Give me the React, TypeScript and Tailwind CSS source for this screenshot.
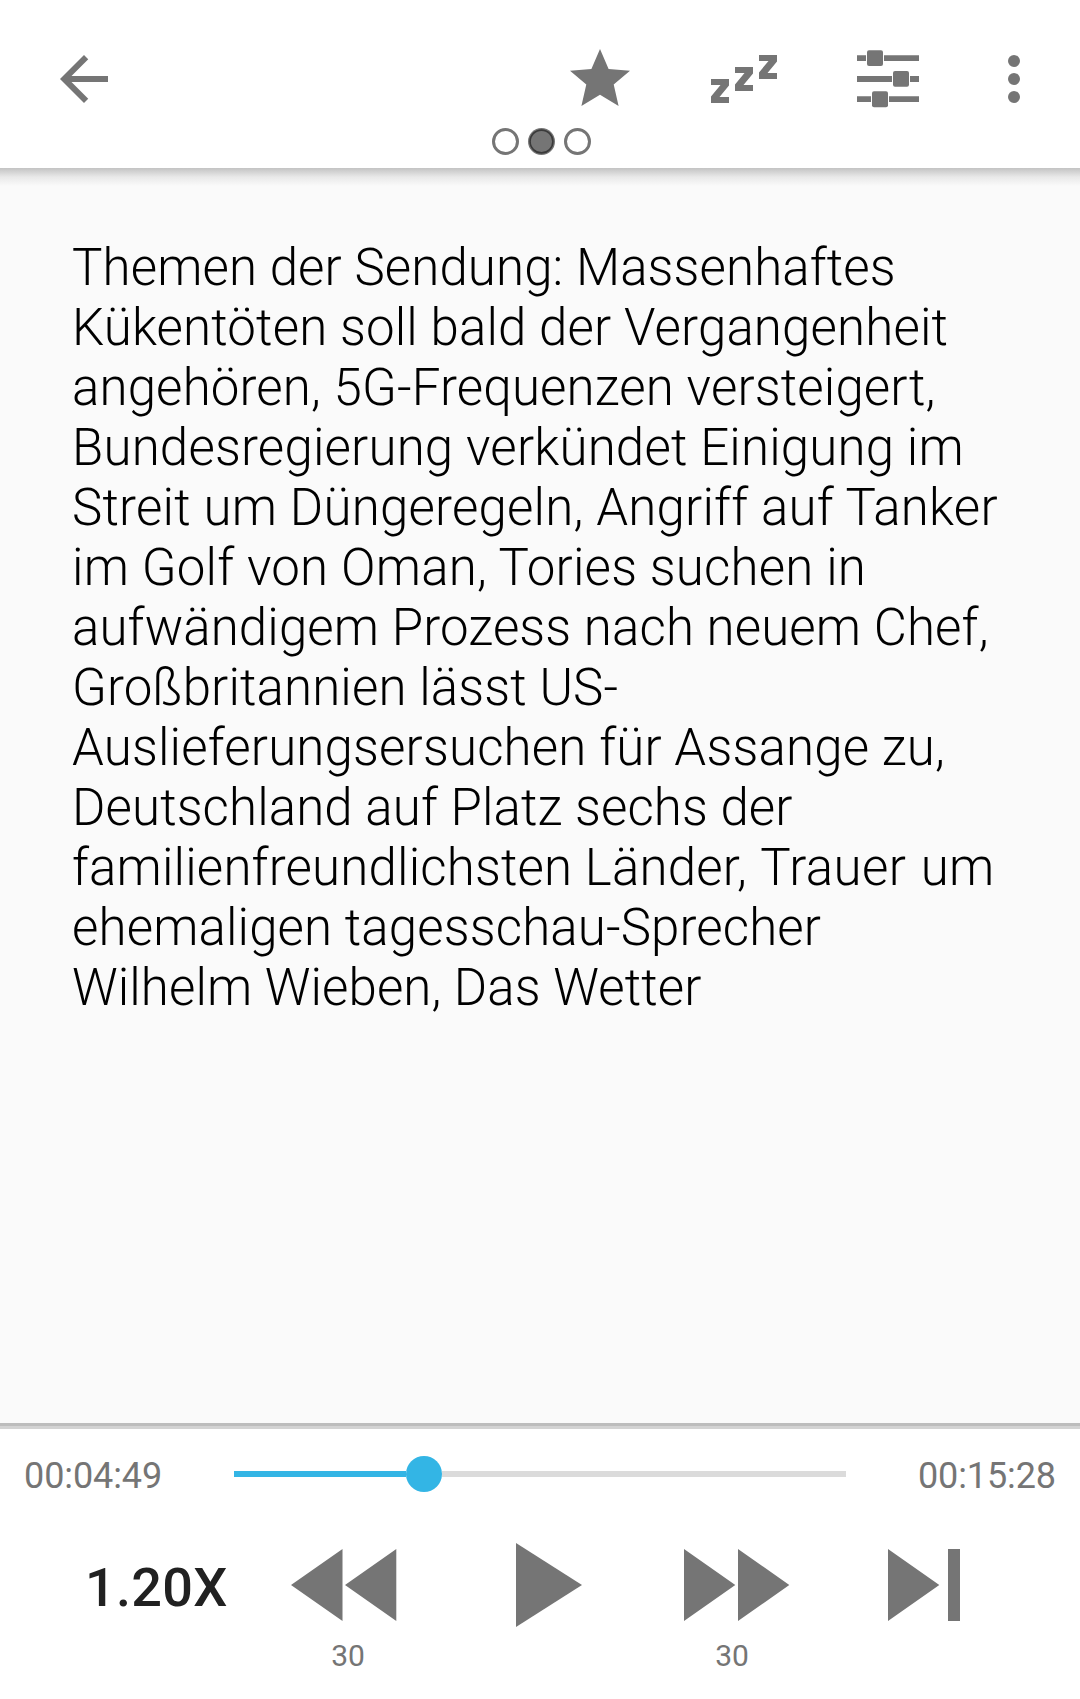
const lines = [
  { text: "Themen der Sendung: Massenhaftes", tracking: "tracking-[0.11px]" },
  { text: "Kükentöten soll bald der Vergangenheit", tracking: "tracking-[0.15px]" },
  { text: "angehören, 5G-Frequenzen versteigert,", tracking: "tracking-[0.14px]" },
  { text: "Bundesregierung verkündet Einigung im", tracking: "tracking-[0.18px]" },
  { text: "Streit um Düngeregeln, Angriff auf Tanker", tracking: "tracking-[0.21px]" },
  { text: "im Golf von Oman, Tories suchen in", tracking: "tracking-[0.2px]" },
  { text: "aufwändigem Prozess nach neuem Chef,", tracking: "tracking-[0.12px]" },
  { text: "Großbritannien lässt US-", tracking: "tracking-[0.14px]" },
  { text: "Auslieferungsersuchen für Assange zu,", tracking: "tracking-[0.17px]" },
  { text: "Deutschland auf Platz sechs der", tracking: "tracking-[0.11px]" },
  { text: "familienfreundlichsten Länder,", tail: " Trauer um", tracking: "tracking-[0.17px]" },
  { text: "ehemaligen tagesschau-Sprecher", tracking: "tracking-[0.13px]" },
  { text: "Wilhelm Wieben, Das Wetter", tracking: "tracking-[0.08px]" },
];

function Header() {
  return (
    <header className="h-[168px] shrink-0 bg-white text-[#757575]">
      <div className="flex h-[122px] items-start pt-[43px]">
        <button className="ml-12 h-18 w-18" aria-label="Zurück">
          <svg viewBox="0 0 24 24" className="size-18 fill-current">
            <path d="M20 11H7.83l5.59-5.59L12 4l-8 8 8 8 1.41-1.41L7.83 13H20v-2z" />
          </svg>
        </button>
        <button className="ml-[444px] h-18 w-18" aria-label="Favorit">
          <svg viewBox="0 0 72 72" className="size-18 fill-current">
            <path d="M36 6L44.6 26L66 27.7L49.7 41.6L54.6 63L36 51.8L17.4 63L22.3 41.6L6 27.7L27.4 26Z" />
          </svg>
        </button>
        <button className="ml-18 h-18 w-18" aria-label="Schlummern">
          <svg viewBox="0 0 72 72" className="size-18 fill-current">
            <path d="M3 36H21V42.5L11.5 54H21V60H3V53.5L12.5 42H3Z" />
            <path d="M27 24H45V30.5L35.5 42H45V48H27V41.5L36.5 30H27Z" />
            <path d="M51 12H69V18.5L59.5 30H69V36H51V29.5L60.5 18H51Z" />
          </svg>
        </button>
        <button className="ml-18 h-18 w-18" aria-label="Einstellungen">
          <svg viewBox="0 0 72 72" className="size-18 fill-current">
            <path d="M5 12.2H14V18H5ZM32 12.2H67V18H32ZM5 33H40V39H5ZM58 33H67V39H58ZM5 53.3H19V59H5ZM37 53.3H67V59H37Z" />
            <rect x="15" y="7.3" width="16" height="15.7" rx="2" />
            <rect x="41" y="28" width="16" height="15.8" rx="2" />
            <rect x="20" y="48.3" width="16" height="16" rx="2" />
          </svg>
        </button>
        <button className="ml-[54px] h-18 w-18" aria-label="Mehr">
          <svg viewBox="0 0 24 24" className="size-18 fill-current">
            <circle cx="12" cy="6" r="2" />
            <circle cx="12" cy="12" r="2" />
            <circle cx="12" cy="18" r="2" />
          </svg>
        </button>
      </div>
      <div className="flex gap-[9px] pl-[492px] pt-[6px]">
        <span className="size-[27px] rounded-full border-3 border-[#757575]" />
        <svg viewBox="0 0 27 27" className="size-[27px]">
          <circle cx="13.5" cy="13.5" r="13.5" fill="#757575" />
          <circle cx="13.5" cy="13.5" r="11.4" fill="none" stroke="#3a3a3a" strokeWidth="1.6" />
        </svg>
        <span className="size-[27px] rounded-full border-3 border-[#757575]" />
      </div>
    </header>
  );
}

function SeekBar() {
  return (
    <div className="flex h-24 items-center justify-between px-6 text-[36px] tracking-[-0.1px] text-[#757575]">
      <span className="w-[210px] pt-[3px]">00:04:49</span>
      <div className="flex flex-1 items-center">
        <span className="h-1.5 w-[172px] bg-[#33b5e5]" />
        <span className="size-9 rounded-full bg-[#33b5e5]" />
        <span className="h-1.5 flex-1 bg-[#dbdbdb]" />
      </div>
      <span className="w-[210px] pt-[3px] text-right">00:15:28</span>
    </div>
  );
}

function Controls() {
  return (
    <div className="flex text-[#757575]">
      <div className="w-[291px] pl-[85px] pt-8 text-[54px] leading-[64px] font-medium tracking-[0.3px] text-[#212121]">
        1.20X
      </div>
      <div className="w-[225px] pt-[19px]">
        <svg viewBox="0 0 106 84" className="h-[84px] w-[106px] fill-current">
          <path d="M51.5 6V78L0 42ZM105.3 6V78L54 42Z" />
        </svg>
        <div className="w-[114px] pt-[11px] text-center text-[30px] leading-9">30</div>
      </div>
      <div className="w-[168px] pt-[19px]">
        <svg viewBox="0 0 66 84" className="h-[84px] w-[66px] fill-current">
          <path d="M0 0L66 42L0 84Z" />
        </svg>
      </div>
      <div className="w-[204px] pt-[19px]">
        <svg viewBox="0 0 106 84" className="h-[84px] w-[106px] fill-current">
          <path d="M0 6L51.3 42L0 78ZM54 6L105.3 42L54 78Z" />
        </svg>
        <div className="w-24 pt-[11px] text-center text-[30px] leading-9">30</div>
      </div>
      <div className="pt-[19px]">
        <svg viewBox="0 0 72 84" className="h-[84px] w-[72px] fill-current">
          <path d="M0 6L51.3 42L0 78ZM60 6H72V78H60Z" />
        </svg>
      </div>
    </div>
  );
}

export default function App() {
  return (
    <div className="flex h-[1699px] w-[1080px] flex-col overflow-hidden bg-[#fafafa] font-[Roboto,sans-serif]">
      <Header />
      <main className="flex-1">
        <div className="h-[18px] bg-linear-to-b from-[#c3c3c3] via-[#e9e9e9] to-[#fafafa]" />
        <div className="pl-18 pt-[52px] text-[51px] leading-[60px] font-light whitespace-nowrap text-black">
          {lines.map((line) => (
            <p key={line.text} className={line.tracking}>
              {line.text}
              {line.tail && <span className="tracking-[0.4px] [word-spacing:1.5px]">{line.tail}</span>}
            </p>
          ))}
        </div>
      </main>
      <footer className="h-[276px] shrink-0 bg-white">
        <div className="h-[3px] bg-[#bdbdbd]" />
        <div className="h-[3px] bg-[#d3d3d3]" />
        <div className="-mt-[3px]">
          <SeekBar />
        </div>
        <div className="pt-0.5">
          <Controls />
        </div>
      </footer>
    </div>
  );
}
